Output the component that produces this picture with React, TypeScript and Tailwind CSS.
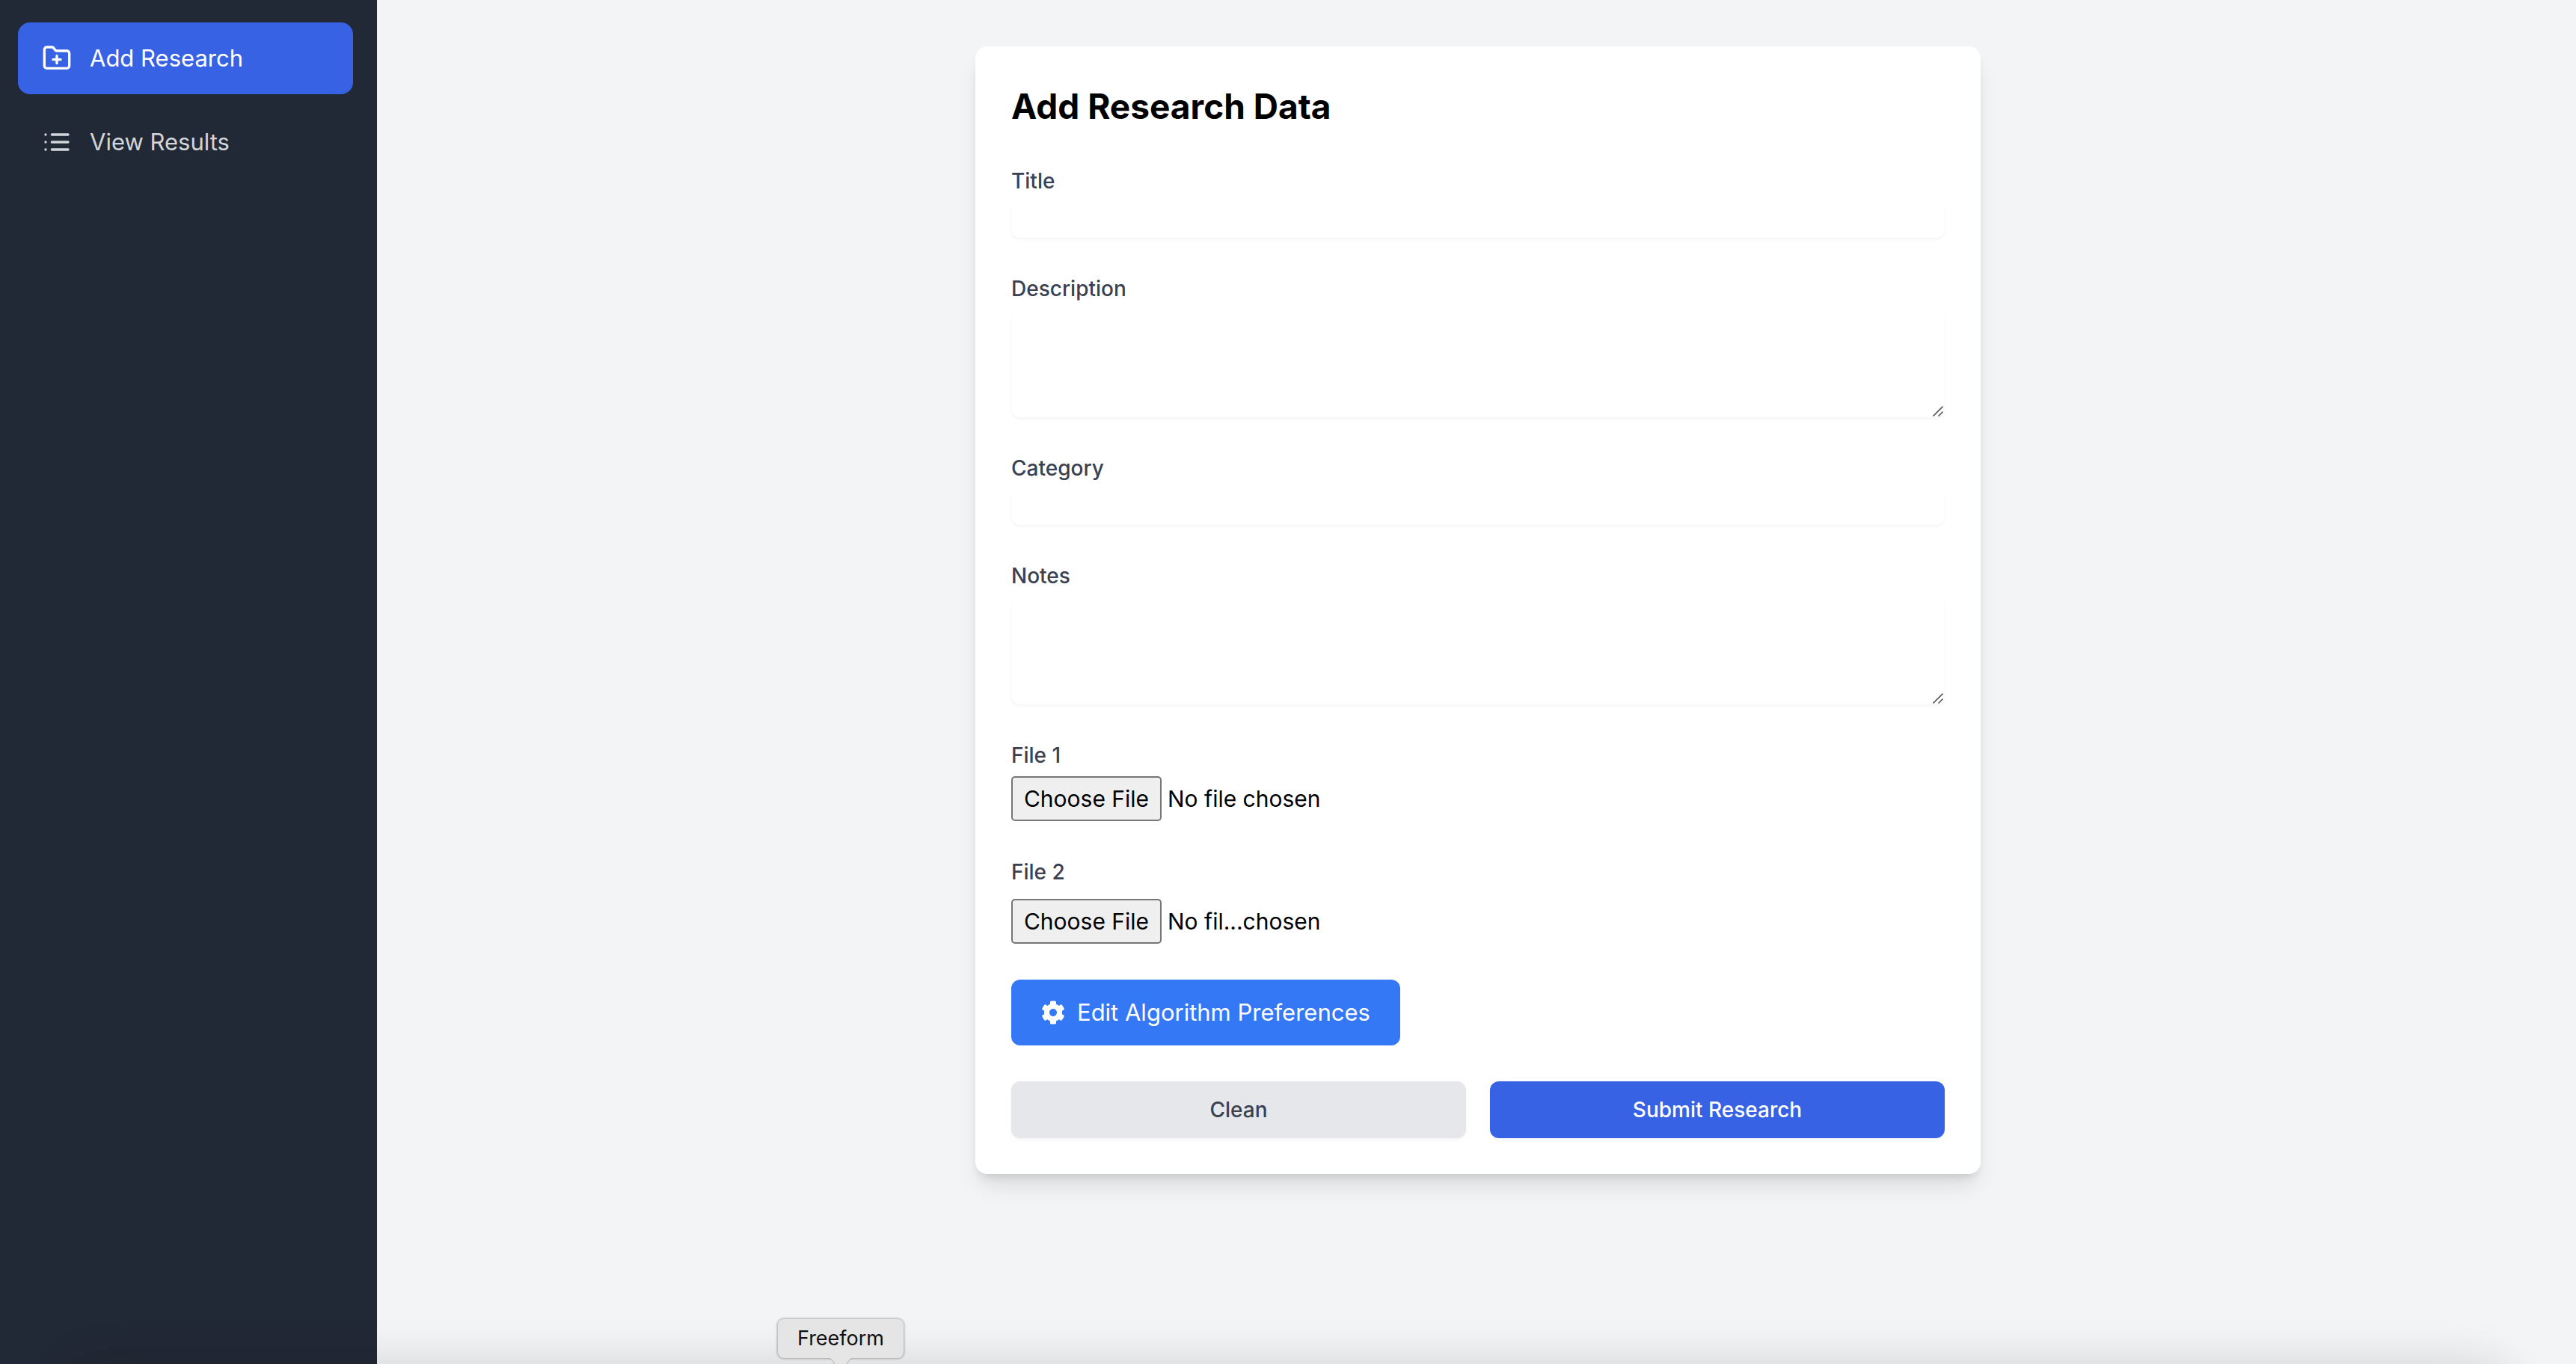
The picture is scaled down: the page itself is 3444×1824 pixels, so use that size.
import React from 'react';
import { FaCog } from 'react-icons/fa';

function FolderPlusIcon() {
  return (
    <svg
      className="size-10 shrink-0"
      viewBox="0 0 24 24"
      fill="none"
      stroke="currentColor"
      strokeWidth="2"
      strokeLinecap="round"
      strokeLinejoin="round"
      aria-hidden="true"
    >
      <path d="M12 10v6" />
      <path d="M9 13h6" />
      <path d="M20 20a2 2 0 0 0 2-2V8a2 2 0 0 0-2-2h-7.900a2 2 0 0 1-1.690-.9L9.600 3.900A2 2 0 0 0 7.930 3H4a2 2 0 0 0-2 2v13a2 2 0 0 0 2 2Z" />
    </svg>
  );
}

function ListIcon() {
  return (
    <svg
      className="size-10 shrink-0"
      viewBox="0 0 24 24"
      fill="none"
      stroke="currentColor"
      strokeWidth="2"
      strokeLinecap="round"
      strokeLinejoin="round"
      aria-hidden="true"
    >
      <path d="M8 6h13M8 12h13M8 18h13M3 6h.01M3 12h.01M3 18h.01" />
    </svg>
  );
}

const labelClass = 'block text-[28px] leading-10 font-medium text-[#3a4151]';
const fieldClass =
  'mt-2 block w-full rounded-xl bg-white text-[30px] leading-[48px] shadow-[0_2px_4px_0_rgba(0,0,0,0.05)] outline-none';
const actionClass =
  'flex-1 rounded-xl border-2 border-transparent py-4 text-[28px] leading-10 font-medium shadow-[0_2px_4px_0_rgba(0,0,0,0.05)]';

function TextField({ id, label }: { id: string; label: string }) {
  return (
    <div>
      <label htmlFor={id} className={labelClass}>
        {label}
      </label>
      <input id={id} type="text" className={fieldClass} />
    </div>
  );
}

function TextAreaField({ id, label }: { id: string; label: string }) {
  return (
    <div>
      <label htmlFor={id} className={labelClass}>
        {label}
      </label>
      <div className="relative">
        <textarea id={id} rows={3} className={`${fieldClass} resize-none`} />
        <svg
          className="pointer-events-none absolute right-0.5 bottom-px size-3.5"
          viewBox="0 0 14 14"
          fill="none"
          stroke="#5a5a5a"
          strokeWidth="1.600"
          aria-hidden="true"
        >
          <path d="M0.500 13.500 13.500 0.500M7.500 13.500l6-6" />
        </svg>
      </div>
    </div>
  );
}

function FileField({ id, label, status, gap }: { id: string; label: string; status: string; gap: string }) {
  const [name, setName] = React.useState('');
  return (
    <div className={`flex flex-col ${gap}`}>
      <label htmlFor={id} className={labelClass}>
        {label}
      </label>
      <div className="flex items-center gap-2 text-[30px] leading-[48px] text-black">
        <input
          id={id}
          type="file"
          onChange={(e) => setName(e.target.files?.[0]?.name ?? '')}
          className="block w-[201px] overflow-hidden text-transparent file:mr-0 file:w-full file:rounded-[5px] file:border-2 file:border-solid file:border-[#767676] file:bg-[#efefef] file:py-1 file:text-black"
        />
        <span>{name || status}</span>
      </div>
    </div>
  );
}

export default function App() {
  return (
    <div className="relative flex min-h-screen overflow-hidden bg-[#f2f4f6] font-[Inter,sans-serif]">
      <aside className="w-[504px] shrink-0 bg-[#222936]">
        <nav className="flex flex-col gap-4 pt-[30px] pr-8 pl-6">
          <a href="#add" className="flex h-24 items-center gap-6 rounded-2xl bg-[#3762e4] px-8 text-[31px] leading-[48px] text-white">
            <FolderPlusIcon />
            Add Research
          </a>
          <a href="#results" className="flex h-24 items-center gap-6 rounded-2xl px-8 text-[31px] leading-[48px] text-[#d2d5da]">
            <ListIcon />
            View Results
          </a>
        </nav>
      </aside>

      <main className="flex-1 pt-[62px] pb-16 pl-1">
        <section className="mx-auto max-w-[1344px] rounded-2xl bg-white p-12 shadow-[0_20px_30px_-6px_rgba(0,0,0,0.1),0_8px_12px_-4px_rgba(0,0,0,0.1)]">
          <h1 className="mb-12 text-[46px] leading-[64px] font-bold text-black">Add Research Data</h1>
          <form className="flex flex-col gap-12" onSubmit={(e) => e.preventDefault()}>
            <TextField id="title" label="Title" />
            <TextAreaField id="description" label="Description" />
            <TextField id="category" label="Category" />
            <TextAreaField id="notes" label="Notes" />
            <FileField id="file1" label="File 1" status="No file chosen" gap="gap-2" />
            <FileField id="file2" label="File 2" status="No fil...chosen" gap="gap-4" />
            <button
              type="button"
              className="flex items-center gap-4 self-start rounded-xl bg-[#3478f6] px-10 py-5 text-[31px] leading-[48px] text-white"
            >
              <FaCog className="size-8" aria-hidden="true" />
              Edit Algorithm Preferences
            </button>
            <div className="flex gap-8">
              <button type="reset" className={`${actionClass} bg-[#e6e7eb] text-[#3a4151]`}>
                Clean
              </button>
              <button type="submit" className={`${actionClass} bg-[#3762e4] text-white`}>
                Submit Research
              </button>
            </div>
          </form>
        </section>
      </main>

      <div className="pointer-events-none absolute inset-x-20 top-full h-40 rounded-[60px] shadow-[0_0_64px_rgba(0,0,0,0.14)]" />

      <div
        role="tooltip"
        className="absolute bottom-2 left-[1040px] rounded-lg bg-[#e5e5e5] px-[26px] text-[27px] leading-[52px] text-[#111] shadow-[0_0_3px_1px_rgba(0,0,0,0.3)]"
      >
        Freeform
        <svg className="absolute top-full left-1/2 h-2 w-8 -translate-x-1/2" viewBox="0 0 32 8" aria-hidden="true">
          <path d="M0 0C4 1 6 5 8 8H24C26 5 28 1 32 0Z" fill="#e5e5e5" />
          <path d="M0 0.500C4 1 6 5 8 8M24 8C26 5 28 1 32 0.500" fill="none" stroke="#a8a8a8" />
        </svg>
      </div>
    </div>
  );
}
